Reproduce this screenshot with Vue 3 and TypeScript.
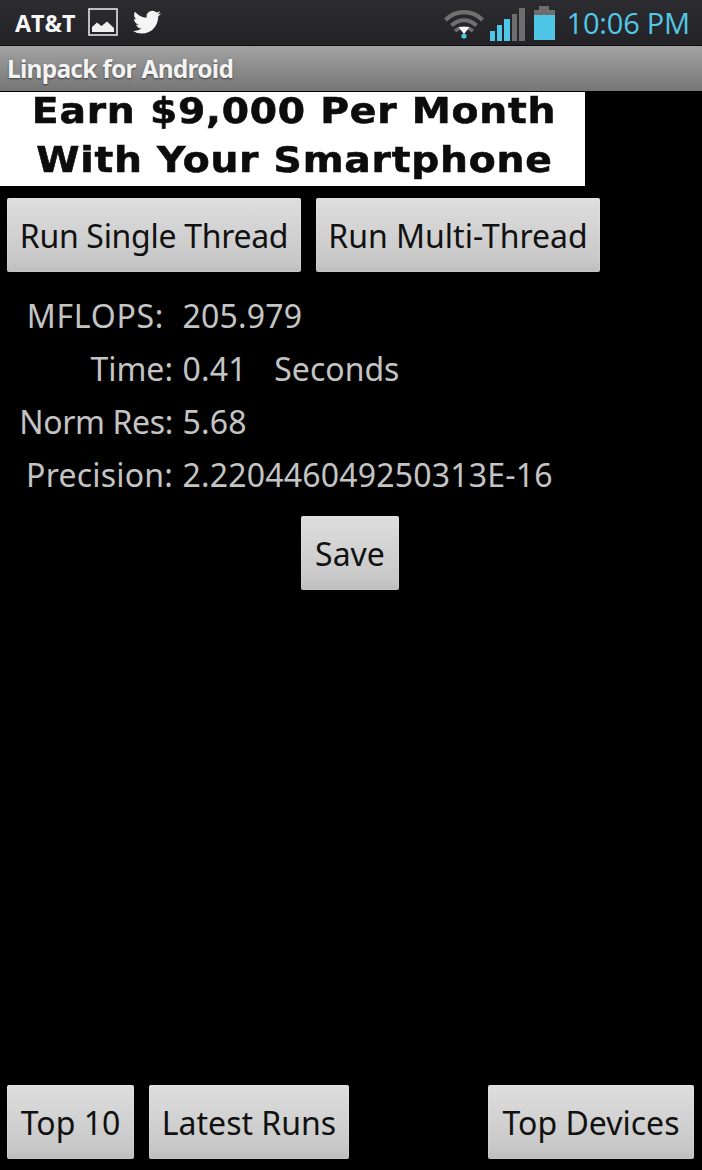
<script setup lang="ts">
const rows: { label: string; value: string; extra?: string; cls?: string }[] = [
  { label: 'MFLOPS:', value: '205.979', cls: 'inset' },
  { label: 'Time:', value: '0.41', extra: 'Seconds' },
  { label: 'Norm Res:', value: '5.68', cls: 'tight' },
  { label: 'Precision:', value: '2.220446049250313E-16', cls: 'loose' },
]
const bars = [
  { h: 10, on: true },
  { h: 16, on: true },
  { h: 22, on: true },
  { h: 27, on: false },
  { h: 33, on: false },
]
</script>

<template>
  <div class="screen">
    <header class="status">
      <span class="carrier">AT&amp;T</span>
      <svg class="pic" width="30" height="28" viewBox="0 0 30 28">
        <rect x="1" y="1" width="28" height="26" fill="none" stroke="#e4e4e4" stroke-width="1.6" />
        <path d="M4 24V19L9 14.5 13.5 18 19 13.5 26 20V24Z" fill="#f0f0f0" />
      </svg>
      <svg class="bird" width="28" height="25" viewBox="0 0 24 21.4">
        <path transform="translate(0 -1.6)" fill="#f4f4f4" d="M23.953 4.57a10 10 0 01-2.825.775 4.958 4.958 0 002.163-2.723c-.951.555-2.005.959-3.127 1.184a4.92 4.92 0 00-8.384 4.482C7.69 8.095 4.067 6.13 1.64 3.162a4.822 4.822 0 00-.666 2.475c0 1.71.87 3.213 2.188 4.096a4.904 4.904 0 01-2.228-.616v.06a4.923 4.923 0 003.946 4.827 4.996 4.996 0 01-2.212.085 4.936 4.936 0 004.604 3.417 9.867 9.867 0 01-6.102 2.105c-.39 0-.779-.023-1.17-.067a13.995 13.995 0 007.557 2.209c9.053 0 13.998-7.496 13.998-13.985 0-.21 0-.42-.015-.63A9.935 9.935 0 0024 4.59z" />
      </svg>
      <span class="grow"></span>
      <svg class="wifi" width="40" height="30" viewBox="0 0 40 30">
        <path d="M1.500 11C12 .5 28 .5 38.500 11" fill="none" stroke="#707070" stroke-width="4.200" />
        <path d="M7.500 16.500C15 9.500 25 9.500 32.500 16.500" fill="none" stroke="#707070" stroke-width="4.200" />
        <path d="M11 22C16 17.500 24 17.500 29 22" fill="none" stroke="#707070" stroke-width="3.400" />
        <path d="M14.500 18H25.500L20 25Z" fill="#ffffff" />
        <circle cx="20" cy="27" r="2.600" fill="#4fc6e6" />
      </svg>
      <div class="signal">
        <i v-for="(b, i) in bars" :key="i" :class="{ on: b.on }" :style="{ height: b.h + 'px' }"></i>
      </div>
      <div class="battery"><i class="cap"></i><i class="empty"></i><i class="charge"></i></div>
      <span class="clock">10:06 PM</span>
    </header>

    <div class="title">Linpack for Android</div>

    <div class="ad">
      <span>Earn $9,000 Per Month</span>
      <span>With Your Smartphone</span>
    </div>

    <div class="run-row">
      <button class="btn single">Run Single Thread</button>
      <button class="btn multi">Run Multi-Thread</button>
    </div>

    <div class="results">
      <div v-for="r in rows" :key="r.label" class="result">
        <span class="label" :class="r.cls">{{ r.label }}</span>
        <span class="value">{{ r.value }}</span>
        <span v-if="r.extra" class="extra">{{ r.extra }}</span>
      </div>
    </div>

    <div class="save-row">
      <button class="btn save">Save</button>
    </div>

    <div class="bottom">
      <button class="btn top10">Top 10</button>
      <button class="btn latest">Latest Runs</button>
      <button class="btn devices">Top Devices</button>
    </div>
  </div>
</template>

<style>
html, body { margin: 0; background: #000; }
</style>

<style scoped>
.screen {
  width: 702px;
  height: 1170px;
  background: #000;
  display: flex;
  flex-direction: column;
  overflow: hidden;
  font-family: "Noto Sans", "Open Sans", sans-serif;
}
.status {
  height: 45px;
  flex: none;
  display: flex;
  align-items: center;
  padding: 0 12px 0 15px;
  background: linear-gradient(#2c2c30, #232327);
  border-bottom: 1px solid #0c0c0c;
}
.carrier {
  font: 700 23.3px "Open Sans", "Noto Sans", sans-serif;
  color: #f6f6f6;
  width: 73px;
  flex: none;
}
.pic { flex: none; margin-top: -1px; }
.bird { flex: none; margin-left: 15px; margin-top: -1px; }
.grow { flex: 1; }
.wifi { flex: none; margin-top: 2px; margin-right: 6px; }
.signal {
  flex: none;
  width: 35px;
  height: 33px;
  margin-top: 3px;
  display: flex;
  align-items: flex-end;
  gap: 2px;
}
.signal i { display: block; width: 5.4px; background: #6e6e6e; }
.signal i.on { background: #4fc6e6; }
.battery {
  flex: none;
  width: 21px;
  height: 34px;
  margin-left: 9px;
  margin-top: 1px;
  display: flex;
  flex-direction: column;
  align-items: center;
}
.battery .cap { display: block; width: 10px; height: 4px; background: #6e6e6e; }
.battery .empty { display: block; width: 100%; height: 5px; background: #6e6e6e; }
.battery .charge { display: block; width: 100%; flex: 1; background: #4fc6e6; }
.clock {
  flex: none;
  margin-left: 12px;
  font: 400 29px "Open Sans", "Noto Sans", sans-serif;
  letter-spacing: -0.2px;
  color: #52c6e6;
}
.title {
  height: 45px;
  flex: none;
  box-sizing: border-box;
  padding-left: 7px;
  line-height: 46px;
  font-size: 24.5px;
  font-weight: 700;
  letter-spacing: -0.75px;
  color: #f4f4f4;
  text-shadow: 0 1px 2px rgba(0, 0, 0, 0.55);
  background: linear-gradient(#a2a2a2, #767676);
}
.ad {
  margin-top: 1px;
  width: 585px;
  height: 94px;
  flex: none;
  background: #fff;
  color: #0c0c0c;
  display: flex;
  flex-direction: column;
  align-items: center;
  gap: 11px;
  font: 700 36px/38px "DejaVu Sans", Verdana, sans-serif;
  letter-spacing: 0.7px;
  white-space: nowrap;
}
.ad span {
  display: block;
  transform: translateX(1.5px) scaleX(1.09);
  -webkit-text-stroke: 0.6px #0c0c0c;
  filter: blur(0.5px);
}
.btn {
  height: 74px;
  padding: 0;
  flex: none;
  box-sizing: border-box;
  border: 0;
  border-radius: 2px;
  font-family: inherit;
  font-size: 32px;
  color: #111;
  background: linear-gradient(#dedede, #c8c8c8 85%, #bdbdbd);
  box-shadow: inset 0 0 0 1px rgba(255, 255, 255, 0.12);
}
.run-row {
  display: flex;
  padding: 12px 0 0 7px;
  gap: 15px;
}
.single { width: 294px; letter-spacing: -0.3px; }
.multi { width: 284px; }
.results {
  margin-top: 17px;
  display: flex;
  flex-direction: column;
}
.result {
  height: 53px;
  display: flex;
  align-items: center;
  font-size: 32px;
  color: #c4c4c4;
  white-space: nowrap;
}
.label { width: 173px; flex: none; text-align: right; }
.label.inset { padding-right: 9px; box-sizing: border-box; letter-spacing: 0.7px; }
.label.tight { letter-spacing: -0.35px; }
.label.loose { letter-spacing: 0.2px; }
.value { margin-left: 9.5px; letter-spacing: 0.2px; }
.extra { margin-left: 27.5px; }
.save-row {
  margin-top: 15px;
  display: flex;
  justify-content: center;
  padding-right: 2px;
}
.save { width: 98px; }
.bottom {
  margin-top: auto;
  margin-bottom: 11px;
  display: flex;
  padding: 0 8px 0 7px;
  gap: 15px;
}
.top10 { width: 127px; }
.latest { width: 200px; }
.devices { width: 206px; margin-left: auto; }
</style>
